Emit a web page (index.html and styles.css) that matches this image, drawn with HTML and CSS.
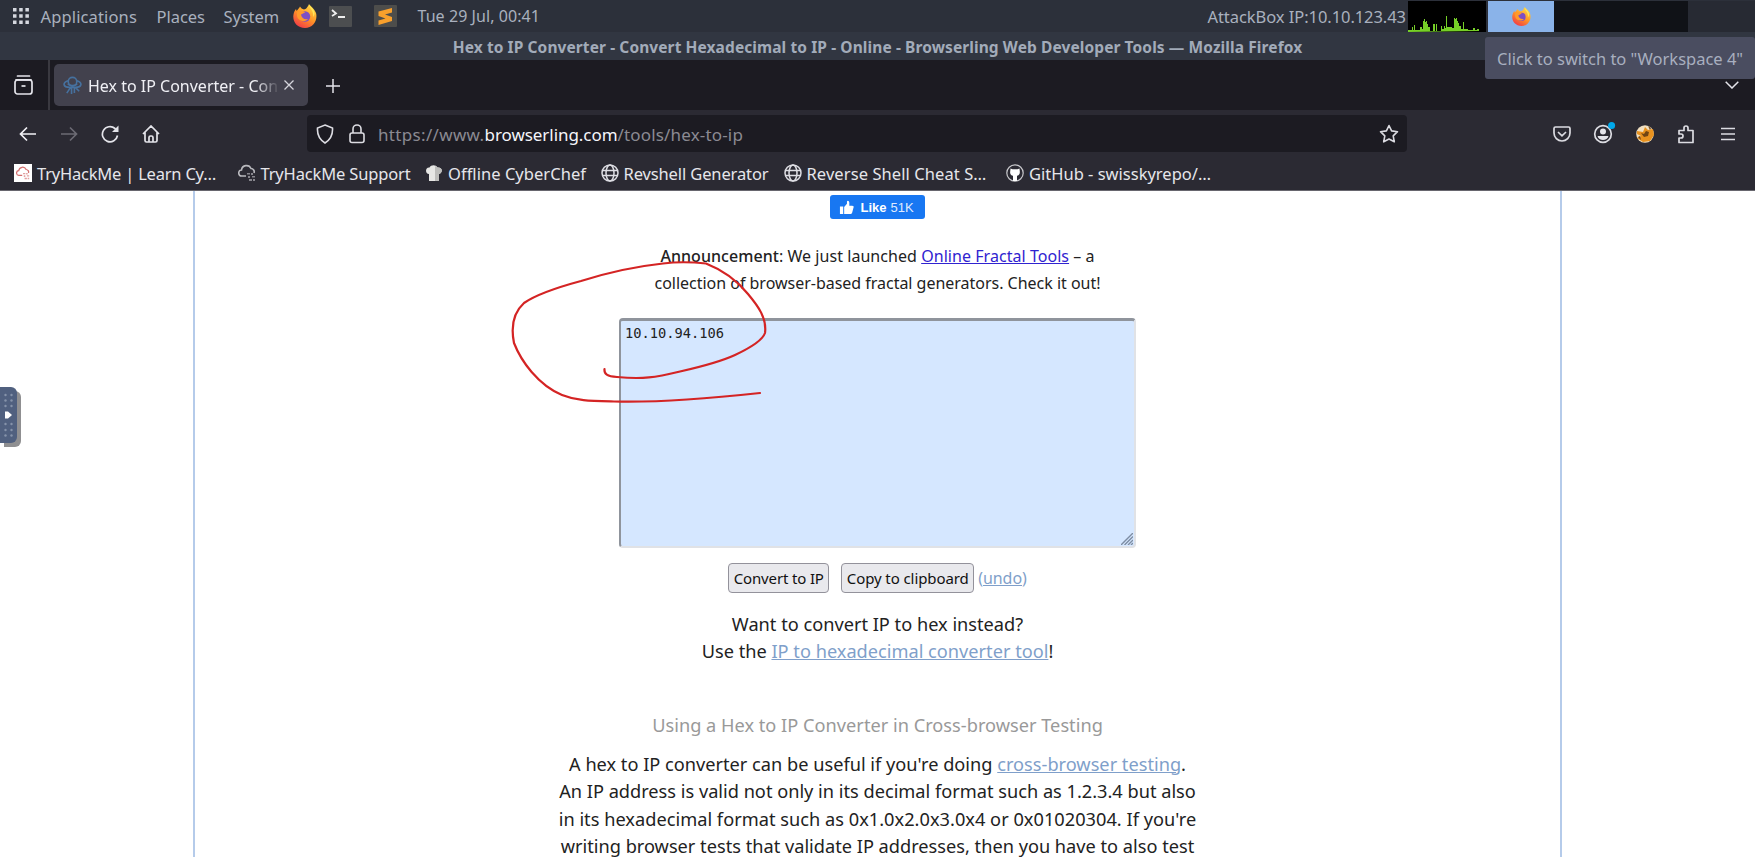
FILE: index.html
```
<!DOCTYPE html>
<html lang="en">
<head>
<meta charset="utf-8">
<title>Hex to IP Converter</title>
<link rel="stylesheet" href="styles.css">
</head>
<body>
<svg width="0" height="0" class="defs">
  <defs>
    <linearGradient id="flame" x1="0.8" y1="0" x2="0.2" y2="1"><stop offset="0" stop-color="#ffe14a"/><stop offset=".5" stop-color="#ff9426"/><stop offset="1" stop-color="#f0344a"/></linearGradient>
    <symbol id="firefox" viewBox="0 0 24 24">
      <path d="M16 0c1 2 5.500 4.500 7 9 2 7-3 15-11 15S-.8 17.500.5 10.500C.9 8 2 6 3 5l.6 2C5 5 6.500 3.800 7 2.500c1 1.500 2 2.500 4 3 2 0 4-3 5-5.500z" fill="url(#flame)"/>
      <circle cx="12" cy="12.500" r="5.200" fill="#7d4fc4"/>
      <path d="M4 8c3-2 7-1 8.500.5-2 .3-3 1.500-4.500 2 .5 4 4 5.500 7 4.500-3 4-10 2-11-3z" fill="#ff9a2c"/>
      <path d="M16 1c1 4 5 6 4 12 3-3 1-7-1-9z" fill="#ffe75a"/>
    </symbol>
    <symbol id="globe" viewBox="0 0 18 18"><g fill="none" stroke="#dedee4" stroke-width="1.500"><circle cx="9" cy="9" r="8"/><ellipse cx="9" cy="9" rx="4" ry="8"/><path d="M1.500 6.500h15M1.500 11.500h15"/></g></symbol>
    <symbol id="cloud" viewBox="0 0 18 18"><path d="M8 12H4a3 3 0 0 1-.5-6A5 5 0 0 1 13 4.500a3.300 3.300 0 0 1 3 4.500" fill="none" stroke="currentColor" stroke-width="1.600"/><path d="M9 9h3v1.500H9zM13 9h2v2h-2zM10 12h2v2h-2zM14 12h3v1.500h-3zM11 15h3v2h-3zM15 15h2v2h-2z" fill="currentColor" opacity=".65"/></symbol>
  </defs>
</svg>

<header class="panel">
  <svg class="grid-icon" viewBox="0 0 16 16" fill="#d5d8df"><path d="M0 0h3.500v3.500H0zM6.200 0h3.500v3.500H6.200zM12.400 0h3.500v3.500h-3.500zM0 6.200h3.500v3.500H0zM6.200 6.200h3.500v3.500H6.200zM12.400 6.200h3.500v3.500h-3.500zM0 12.400h3.500v3.500H0zM6.200 12.400h3.500v3.500H6.200zM12.400 12.400h3.500v3.500h-3.500z"/></svg>
  <span class="t apps">Applications</span>
  <span class="t places">Places</span>
  <span class="t system">System</span>
  <svg class="fx"><use href="#firefox"/></svg>
  <svg class="term" viewBox="0 0 23 21"><rect width="23" height="21" rx="1" fill="#4c4e50"/><path d="M3 4l4 3.500L3 10" fill="none" stroke="#eee" stroke-width="1.800"/><path d="M9 11h7" stroke="#eee" stroke-width="2"/></svg>
  <svg class="subl" viewBox="0 0 23 22"><rect width="23" height="22" rx="1" fill="#4d4d4b"/><path d="M4.500 6.500L18 3v4.500l-7 2 7 2.500v4L4.500 20v-4.500l7-2-7-2.500z" fill="#f9a02c"/></svg>
  <span class="t clock">Tue 29 Jul, 00:41</span>
  <span class="t ip">AttackBox IP:10.10.123.43</span>
  <svg class="graph" viewBox="0 0 78 31"><rect width="78" height="31" fill="#000"/><path d="M0 31v-2h4v-3h1v3h1v-5h1v5h5v-3h2v2h1v-8h1v-2h1v3h1v-1h1v3h1v3h2v4h3v-7h2v7h1v-7h1v7h4v-5h1v3h2v-3h1v2h1v-12h1v11h5v1h2v-10h1v1h1v-1h1v3h1v2h1v3h2v3h2v-7h1v7h4v1h5v-2h2v2h2v-1h2v2z" fill="#76cf27"/></svg>
  <div class="pager"><div class="ws on"><svg><use href="#firefox"/></svg></div><div class="ws"></div><div class="ws"></div><div class="ws last"></div></div>
</header>
<div class="titlebar"><span class="t wtitle">Hex to IP Converter - Convert Hexadecimal to IP - Online - Browserling Web Developer Tools — Mozilla Firefox</span></div>

<div class="tabs">
  <div class="view"><svg width="19" height="20" viewBox="0 0 19 20" fill="none" stroke="#e4e4ea" stroke-width="1.700"><path d="M3.500 1h12M2 4.800h15" stroke-linecap="round"/><rect x="1" y="5" width="17" height="14" rx="2.500"/><path d="M7.500 11h4"/></svg></div>
  <div class="tab">
    <svg class="ufo" viewBox="0 0 20 20" fill="none" stroke="#46719f" stroke-width="1.700"><circle cx="10" cy="6" r="4.500"/><path d="M5.500 5C-1 7 0 12 7 12h6c7 0 8-5 1.500-7M5 8.500c3 2 7 2 10 0M8 12l-4 6M9 12v7M12 12v6M13 12l4 4"/></svg>
    <span class="t tabtext">Hex to IP Converter - Con</span>
    <svg class="x" viewBox="0 0 10 10"><path d="M.5.5l9 9M9.500.5l-9 9" stroke="#d5d5dc" stroke-width="1.300"/></svg>
  </div>
  <svg class="plus" viewBox="0 0 14 14"><path d="M7 0v14M0 7h14" stroke="#e4e4ea" stroke-width="1.500"/></svg>
  <svg class="chev" viewBox="0 0 14 8"><path d="M.7.7L7 7 13.300.7" fill="none" stroke="#e4e4ea" stroke-width="1.500"/></svg>
</div>

<nav class="nav">
  <div class="btns">
    <svg viewBox="0 0 18 18" stroke="#f2f2f6"><path d="M17 9H1.500M8 2.500L1.500 9 8 15.500"/></svg>
    <svg viewBox="0 0 18 18" stroke="#6c6b74"><path d="M1 9h15.500M10 2.500L16.500 9 10 15.500"/></svg>
    <svg viewBox="0 0 18 18" stroke="#e4e4ea"><path d="M16.500 10.500A7.600 7.600 0 1 1 14 3.500L16.500 6"/><path d="M17.500.5v6.500H11z" fill="#e4e4ea" stroke="none"/></svg>
    <svg viewBox="0 0 18 18" stroke="#e4e4ea"><path d="M1 9l8-8 8 8M3 7.500V15.500a1.500 1.500 0 0 0 1.500 1.500h9a1.500 1.500 0 0 0 1.500-1.500V7.500M7 17v-4.500a1.500 1.500 0 0 1 1.500-1.500h1a1.500 1.500 0 0 1 1.500 1.500V17"/></svg>
  </div>
  <div class="url">
    <svg class="shield" viewBox="0 0 18 20"><path d="M9 1l7.500 3c.5 7-2.500 12-7.500 15C4 16 1 11 1.500 4z"/></svg>
    <svg class="lock" viewBox="0 0 16 20"><rect x="1" y="9" width="14" height="9.500" rx="2"/><path d="M4 9V5a4 4 0 0 1 8 0v4"/></svg>
    <span class="urltext"><span class="t u1">https://www.</span><span class="t u2">browserling.com</span><span class="t u3">/tools/hex-to-ip</span></span>
    <svg class="star" viewBox="0 0 20 20"><path d="M10 1.500l2.600 5.400 5.900.8-4.300 4.100 1.100 6L10 15l-5.300 2.800 1.100-6L1.500 7.700l5.900-.8z" stroke-linejoin="round"/></svg>
  </div>
  <div class="tools">
    <svg viewBox="0 0 20 20"><path d="M3.500 3h13A1.500 1.500 0 0 1 18 4.500V9a8 8 0 0 1-16 0V4.500A1.500 1.500 0 0 1 3.500 3zM6 8l4 3.800L14 8"/></svg>
    <svg viewBox="0 0 20 20" class="acct"><circle cx="10" cy="10" r="8.300"/><circle cx="10" cy="7.500" r="3" fill="#e4e4ea" stroke="none"/><path d="M4.500 12h11c-.5 2.500-3 4-5.500 4s-5-1.500-5.500-4z" fill="#e4e4ea" stroke="none"/><circle cx="18.600" cy="1.600" r="3.500" fill="#00a8ea" stroke="none"/></svg>
    <svg viewBox="0 0 20 20"><g stroke="none"><circle cx="10" cy="10" r="8.800" fill="#f0dfc0"/><path d="M2 7l6 1 2-5 3 3 5-1 1 6-4 6-7 1-6-4 4-2-4-2z" fill="#e8921f"/><path d="M6 9l3 1 2-3 3 1-1 4-4 1zM13 2l2 4 1-2zM3 13l3 3-1-4z" fill="#704514"/></g></svg>
    <svg viewBox="0 0 20 20"><path d="M3 18.500V14h2a2 2 0 0 0 0-4H3V6.500h5V4a2 2 0 0 1 4 0v2.500h5v12z" stroke-linejoin="round"/></svg>
    <svg viewBox="0 0 20 20"><path d="M3 4.500h14M3 10h14M3 15.500h14"/></svg>
  </div>
</nav>

<div class="bookmarks">
  <svg class="bi b1" viewBox="0 0 18 18"><rect width="18" height="18" fill="#fff"/><svg x="2" y="2" width="14" height="14" color="#d46f6f"><use href="#cloud"/></svg></svg><span class="t k1">TryHackMe | Learn Cy…</span>
  <svg class="bi b2" viewBox="0 0 18 18" color="#b9b9be"><use href="#cloud"/></svg><span class="t k2">TryHackMe Support</span>
  <svg class="bi b3" viewBox="0 0 18 18"><path d="M4 17V10C0 10 0 3 4.500 3.500 6 .5 11 .5 12.500 3.500 18 3 18 9 14 10v7z" fill="#e6e6e4"/><path d="M10 2v15h4v-7c4-1 4-7-1.500-6.500z" fill="#bdbdbb"/></svg><span class="t k3">Offline CyberChef</span>
  <svg class="bi b4"><use href="#globe"/></svg><span class="t k4">Revshell Generator</span>
  <svg class="bi b5"><use href="#globe"/></svg><span class="t k5">Reverse Shell Cheat S…</span>
  <svg class="bi b6" viewBox="0 0 18 18"><circle cx="9" cy="9" r="8.200" fill="#2b2a33" stroke="#c8c8cc" stroke-width="1.200"/><path d="M4.500 4.500l2 .8h5l2-.8.3 3c.3 3-1.300 4-2.800 4.300V17H7v-5.200C5 11.500 3.800 10 4.200 7.500z" fill="#fff"/></svg><span class="t k6">GitHub - swisskyrepo/…</span>
</div>

<main class="page">
  <div class="sheet">
    <div class="like"><svg viewBox="0 0 16 16" fill="#fff"><path d="M1 7h3.500v8H1zM5.500 7.500L8.500 4V1.500C9 .3 11 .8 11 3v3h3c1.500 0 2 1 1.500 2L14 13.500c-.3 1-1 1.500-2 1.500H5.500z"/></svg><b>Like</b><span>51K</span></div>
    <div class="announce">
      <p><span class="t a1"><b>Announcement</b>: We just launched <a>Online Fractal Tools</a> – a</span></p>
      <p><span class="t a2">collection of browser-based fractal generators. Check it out!</span></p>
    </div>
    <div class="box">10.10.94.106<svg viewBox="0 0 12 12"><path d="M0 12L12 0M3.500 12L12 3.500M7 12l5-5M10 12l2-2" stroke="#7d8da3" stroke-width="1.400"/></svg></div>
    <div class="actions"><span class="btn c1"><span class="t bt1">Convert to IP</span></span><span class="btn c2"><span class="t bt2">Copy to clipboard</span></span><span class="t undo">(<a>undo</a>)</span></div>
    <div class="more">
      <p><span class="t m1">Want to convert IP to hex instead?</span></p>
      <p><span class="t m2">Use the <a>IP to hexadecimal converter tool</a>!</span></p>
    </div>
    <h2><span class="t h">Using a Hex to IP Converter in Cross-browser Testing</span></h2>
    <div class="para">
      <p><span class="t p1">A hex to IP converter can be useful if you're doing <a>cross-browser testing</a>.</span></p>
      <p><span class="t p2">An IP address is valid not only in its decimal format such as 1.2.3.4 but also</span></p>
      <p><span class="t p3">in its hexadecimal format such as 0x1.0x2.0x3.0x4 or 0x01020304. If you're</span></p>
      <p><span class="t p4">writing browser tests that validate IP addresses, then you have to also test</span></p>
    </div>
  </div>
</main>

<div class="tooltip"><span class="t tip">Click to switch to "Workspace 4"</span></div>
<div class="handle"><svg viewBox="0 0 17 56"><g fill="#8592aa"><circle cx="5.500" cy="8" r="1.200"/><circle cx="11.500" cy="8" r="1.200"/><circle cx="5.500" cy="13.500" r="1.200"/><circle cx="11.500" cy="13.500" r="1.200"/><circle cx="5.500" cy="19" r="1.200"/><circle cx="11.500" cy="19" r="1.200"/><circle cx="5.500" cy="37" r="1.200"/><circle cx="11.500" cy="37" r="1.200"/><circle cx="5.500" cy="43" r="1.200"/><circle cx="11.500" cy="43" r="1.200"/><circle cx="5.500" cy="48.500" r="1.200"/><circle cx="11.500" cy="48.500" r="1.200"/></g><path d="M5 24.500h3l4 3.500-4 3.500H5z" fill="#fff"/></svg></div>
<svg class="ink" viewBox="0 0 1755 857"><path d="M604.500 369C604 374 607 376.500 617 377C643 379.500 655 377.500 680 371.500C700 367 722 361 735 355C752 347 763 339 765 333C767 318 758 306 748 294C736 279 720 269 706 263.500C692 262 675 262 663 263.500C630 267 600 275 581 281C555 288 534 296 524 303C513 313 511 328 514 343C521 361 538 385 562 395C577 401 590 401 614 401.500C650 402.500 700 399.500 760 393"/></svg>
</body>
</html>
```
FILE: styles.css
```
* { box-sizing: border-box; }
body { margin: 0; width: 1755px; height: 857px; overflow: hidden; background: #fff; font-family: "Noto Sans", "Open Sans", sans-serif; font-size: 16.500px; color: #222; position: relative; display: flex; flex-direction: column; }
.defs { position: absolute; }
svg { display: block; flex: none; }
p, h2 { margin: 0; }
.t { white-space: pre; display: inline-block; flex: none; }

.panel { height: 32px; flex: none; background: #2c303a; color: #a9b0be; display: flex; align-items: center; }
.grid-icon { width: 16px; height: 16px; margin-left: 13px; }
.apps { width: 96.500px; margin-left: 11.500px; letter-spacing: .14px; }
.places { width: 48.500px; margin-left: 19.500px; letter-spacing: -.021px; }
.system { width: 55.500px; margin-left: 18.500px; letter-spacing: -.095px; }
.fx { width: 24px; height: 24px; margin-left: 14px; }
.term { width: 23px; height: 21px; margin-left: 12px; }
.subl { width: 23px; height: 22px; margin-left: 22px; }
.clock { width: 122.500px; margin-left: 20.500px; font-size: 16px; letter-spacing: .066px; }
.ip { width: 198.500px; margin-left: auto; letter-spacing: -.063px; }
.graph { width: 78px; height: 31px; margin: 1px 2px 0 2px; }
.pager { display: flex; width: 267px; height: 31px; margin-top: 1px; align-self: flex-start; }
.ws { width: 67px; background: #101217; display: flex; align-items: center; justify-content: center; }
.ws.on { width: 66px; background: #8ab3e9; }
.ws.last { background: #272a33; }
.ws svg { width: 19px; height: 19px; }

.titlebar { height: 28px; flex: none; padding-top: 1px; background: #313641; color: #a2abb9; font-weight: 700; font-size: 15.500px; display: flex; align-items: center; justify-content: center; }
.wtitle { letter-spacing: .092px; }

.tabs { height: 50px; flex: none; background: #1c1b22; display: flex; align-items: center; color: #f0f0f5; font-size: 16px; }
.view { width: 50px; height: 50px; border-right: 2px solid #3a3940; padding: 15px 0 0 13.500px; }
.tab { width: 254px; height: 42px; margin-left: 4px; background: #42414d; border-radius: 5px; display: flex; align-items: center; }
.ufo { width: 19px; height: 19px; margin-left: 9px; }
.tabtext { width: 190px; margin-left: 6px; padding-top: 2px; -webkit-mask-image: linear-gradient(90deg, #000 88%, transparent 101%); mask-image: linear-gradient(90deg, #000 88%, transparent 101%); }
.x { width: 10px; height: 10px; margin-left: 6px; }
.plus { width: 14px; height: 14px; margin: 2px 0 0 17.500px; }
.chev { width: 14px; height: 8px; margin-left: auto; margin-right: 16px; }

.nav { height: 44px; flex: none; background: #2b2a33; display: flex; align-items: center; padding-top: 3px; }
.btns { display: flex; gap: 23.300px; padding-left: 18.500px; width: 307px; }
.btns svg { width: 18px; height: 18px; fill: none; stroke-width: 1.700; }
.url { width: 1100px; height: 37px; background: #1c1b22; border-radius: 4px; display: flex; align-items: center; }
.url svg { fill: none; stroke: #dcdce2; stroke-width: 1.600; }
.shield { width: 18px; height: 20px; margin-left: 9px; }
.lock { width: 16px; height: 20px; margin-left: 15px; }
.urltext { margin-left: 13px; padding-top: 1px; display: flex; color: #8b8a92; font-size: 17px; }
.u1 { width: 106.500px; letter-spacing: .33px; }
.u2 { width: 133px; letter-spacing: -.055px; color: #f5f5fa; }
.u3 { width: 125.500px; letter-spacing: .166px; }
.star { width: 20px; height: 20px; margin-left: auto; margin-right: 8.500px; }
.tools { display: flex; gap: 21.400px; margin-left: 145px; }
.tools svg { width: 20px; height: 20px; fill: none; stroke: #dcdce2; stroke-width: 1.700; overflow: visible; }

.bookmarks { height: 37px; flex: none; padding-top: 2px; background: #2b2a33; border-bottom: 1px solid #67666e; color: #e6e6eb; display: flex; align-items: center; }
.bookmarks .t { margin-left: 5px; }
.bi { width: 18px; height: 18px; }
.b1 { margin-left: 14px; }
.b2 { margin-left: 21.500px; }
.b3 { margin-left: 14.500px; }
.b4 { margin-left: 14.500px; }
.b5 { margin-left: 15px; }
.b6 { margin-left: 19.500px; }
.k1 { width: 179px; letter-spacing: -.214px; }
.k2 { width: 150px; letter-spacing: -.157px; }
.k3 { width: 138px; letter-spacing: .043px; }
.k4 { width: 145px; letter-spacing: -.12px; }
.k5 { width: 180px; letter-spacing: .084px; }
.k6 { width: 182px; }

.page { flex: 1; min-height: 0; padding: 0 193px; }
.sheet { height: 100%; border-left: 2px solid #b5cbea; border-right: 2px solid #b5cbea; display: flex; flex-direction: column; align-items: center; text-align: center; }
.like { margin-top: 4px; width: 95px; height: 24px; flex: none; border-radius: 3px; background: #1877f2; color: #fff; display: flex; align-items: center; font: 13px "Liberation Sans", sans-serif; padding-left: 9px; }
.like svg { width: 15px; height: 15px; margin-right: 6.500px; }
.like span { margin-left: 4px; color: #dfeaff; }
.announce { margin-top: 24px; line-height: 26.500px; font-size: 16px; }
.announce b { font-weight: 500; }
.announce a { color: #3023d0; }
.a1 { letter-spacing: .05px; }
.a2 { letter-spacing: -.02px; }
.box { margin-top: 22px; width: 517px; height: 230px; flex: none; background: #d5e7ff; border: 2px solid #e0e2e6; border-top: 3px solid #8f949c; border-left-color: #8f949c; border-radius: 4px; text-align: left; padding: 3px 4px; font: 13.700px/18px "DejaVu Sans Mono", monospace; position: relative; }
.box svg { position: absolute; right: 1px; bottom: 1px; width: 12px; height: 12px; }
.actions { margin-top: 15px; display: flex; align-items: center; height: 30px; flex: none; color: #7f9fca; font-size: 16px; }
.btn { height: 30px; border: 1px solid #93929b; border-radius: 4px; background: #e9e9ed; color: #111; display: flex; align-items: center; justify-content: center; font-size: 15px; }
.c1 { width: 101px; margin-right: 12px; }
.c2 { width: 133px; margin-right: 4px; }
.bt1 { letter-spacing: -.151px; }
.bt2 { letter-spacing: -.084px; }
.undo { letter-spacing: -.07px; }
a { color: #7f9fca; text-decoration: underline; }
.more { margin-top: 17.500px; font-size: 18.200px; line-height: 27.500px; }
h2 { margin-top: 46px; font-size: 18.200px; line-height: 27.500px; font-weight: 400; color: #999; }
.h { letter-spacing: .012px; }
.p3 { letter-spacing: .02px; }
.para { margin-top: 11.500px; font-size: 18.200px; line-height: 27.500px; }
.more p, .para p, .announce p { display: flex; justify-content: center; }

.tooltip { position: absolute; left: 1485px; top: 37px; width: 270px; height: 42px; background: #4a4d60; border-radius: 3px; color: #a8afbf; display: flex; align-items: center; padding-left: 12px; }
.tip { letter-spacing: -.018px; }
.handle { position: absolute; left: 0; top: 387px; width: 17px; height: 56px; background: #50607f; border-radius: 0 6px 6px 0; box-shadow: 4px 4px 0 #8f8f91; }
.ink { position: absolute; left: 0; top: 0; width: 1755px; height: 857px; fill: none; stroke: #d42424; stroke-width: 2.200; stroke-linecap: round; }
```
